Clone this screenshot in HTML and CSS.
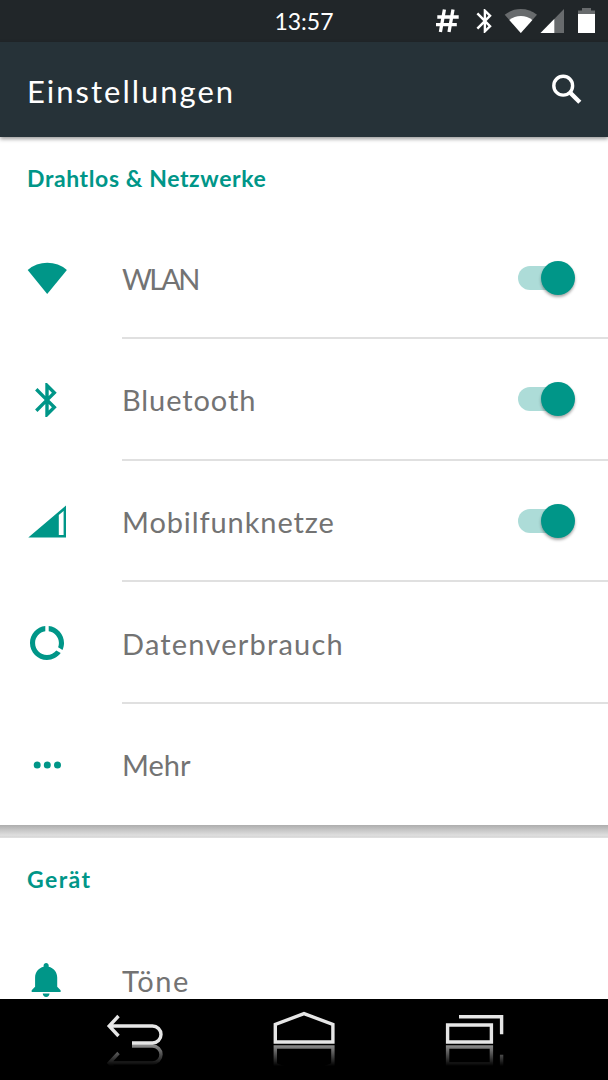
FILE: index.html
```html
<!DOCTYPE html>
<html lang="de">
<head>
    <meta charset="UTF-8">
    <meta name="viewport" content="width=device-width, initial-scale=1.0">
    <title>Einstellungen</title>
    <link rel="stylesheet" href="styles.css">
</head>
<body>
    <div class="screen">
        <div class="status-bar">
            <span class="clock">13:57</span>
            <div class="status-icons">
                <svg width="36" height="42" viewBox="0 0 36 42" fill="none" stroke="#fff" stroke-width="3.3">
                    <path d="M5.3 17h21.4M4 24.7h20.8M12.4 9.5L8.4 32M21 9.5L17 32"/>
                </svg>
                <svg width="34" height="42" viewBox="0 0 34 42" fill="#fff">
                    <path transform="translate(2.5 6.6) scale(1.2)" d="M17.71 7.71L12 2h-1v7.59L6.41 5 5 6.41 10.59 12 5 17.59 6.41 19 11 14.41V22h1l5.71-5.71-4.3-4.29 4.3-4.29zM13 5.83l1.88 1.88L13 9.59V5.83zm1.88 10.46L13 18.17v-3.76l1.88 1.88z"/>
                </svg>
                <svg width="38" height="42" viewBox="0 0 38 42">
                    <path fill="#686b6d" d="M2.7 14.7A26 26 0 0 1 35 14.7L18.8 33z"/>
                    <path fill="#fff" d="M7.3 19.9A19 19 0 0 1 30.4 19.9L18.8 33z"/>
                </svg>
                <svg width="30" height="42" viewBox="0 0 30 42">
                    <path fill="#686b6d" d="M.5 33L24 9v24z"/>
                    <path fill="#fff" d="M.5 33l13.8-14v14z"/>
                </svg>
                <svg width="32" height="42" viewBox="0 0 32 42">
                    <path fill="#686b6d" d="M12 8h9v2.5h4V14H8v-3.5h4z"/>
                    <path fill="#fff" d="M8 14h17v19H8z"/>
                </svg>
            </div>
        </div>

        <header class="app-bar">
            <h1>Einstellungen</h1>
            <svg width="36" height="36" viewBox="0 0 36 36" fill="none" stroke="#fff">
                <circle cx="14.2" cy="14.7" r="9.4" stroke-width="3.4"/>
                <path d="M21.5 22l9.3 9.3" stroke-width="4.4"/>
            </svg>
        </header>

        <main class="content">
            <section class="card">
                <h2 class="section-network">Drahtlos &amp; Netzwerke</h2>
                <div class="row">
                    <svg class="icon" viewBox="0 0 48 48"><path d="M4.7 16A30 30 0 0 1 43.9 16L24.2 40z"/></svg>
                    <div class="row-body">
                        <span class="label wlan">WLAN</span>
                        <div class="switch"></div>
                    </div>
                </div>
                <div class="row">
                    <svg class="icon" viewBox="-2.1 -2.1 28.2 28.2"><path d="M17.71 7.71L12 2h-1v7.59L6.41 5 5 6.41 10.59 12 5 17.59 6.41 19 11 14.41V22h1l5.71-5.71-4.3-4.29 4.3-4.29zM13 5.83l1.88 1.88L13 9.59V5.83zm1.88 10.46L13 18.17v-3.76l1.88 1.88z"/></svg>
                    <div class="row-body">
                        <span class="label bluetooth">Bluetooth</span>
                        <div class="switch"></div>
                    </div>
                </div>
                <div class="row">
                    <svg class="icon" viewBox="0 0 48 48"><path fill-rule="evenodd" d="M5.3 40.5L43 8.5v32zM35.8 18v20h4.8V14z"/></svg>
                    <div class="row-body">
                        <span class="label mobile">Mobilfunknetze</span>
                        <div class="switch"></div>
                    </div>
                </div>
                <div class="row">
                    <svg class="icon" viewBox="-2.1 -2.1 28.2 28.2"><path d="M13 2.05v3.03c3.39.49 6 3.39 6 6.92 0 .9-.18 1.75-.48 2.54l2.6 1.53c.56-1.24.88-2.62.88-4.07 0-5.18-3.95-9.45-9-9.95zM12 19c-3.87 0-7-3.13-7-7 0-3.53 2.61-6.43 6-6.92V2.05c-5.06.5-9 4.76-9 9.95 0 5.52 4.47 10 9.99 10 3.31 0 6.24-1.61 8.06-4.09l-2.6-1.53C16.17 17.98 14.21 19 12 19z"/></svg>
                    <div class="row-body">
                        <span class="label data">Datenverbrauch</span>
                    </div>
                </div>
                <div class="row">
                    <svg class="icon" viewBox="0 0 48 48"><circle cx="14.2" cy="24" r="3.5"/><circle cx="24.3" cy="24" r="3.5"/><circle cx="34.5" cy="24" r="3.5"/></svg>
                    <div class="row-body">
                        <span class="label more">Mehr</span>
                    </div>
                </div>
            </section>

            <div class="gap"></div>

            <section class="card">
                <h2 class="section-device">Gerät</h2>
                <div class="row">
                    <svg class="icon" viewBox="-2.1 -2.1 28.2 28.2"><path d="M11.5 22c1.1 0 2-.9 2-2h-4c0 1.1.9 2 2 2zm6.5-6v-5.5c0-3.07-2.13-5.64-5-6.32V3.5c0-.83-.67-1.5-1.5-1.5S10 2.67 10 3.5v.68c-2.87.68-5 3.25-5 6.32V16l-2 2v1h17v-1l-2-2z"/></svg>
                    <div class="row-body">
                        <span class="label sound">Töne</span>
                    </div>
                </div>
            </section>
        </main>

        <nav class="nav-bar">
            <svg width="608" height="81" viewBox="0 0 608 81">
                <defs>
                    <linearGradient id="fade" x1="0" y1="45" x2="0" y2="67" gradientUnits="userSpaceOnUse">
                        <stop offset="0" stop-color="#fff" stop-opacity=".65"/>
                        <stop offset="1" stop-color="#fff" stop-opacity="0"/>
                    </linearGradient>
                    <mask id="reflect" maskUnits="userSpaceOnUse" x="0" y="45" width="608" height="22">
                        <rect x="0" y="45" width="608" height="22" fill="url(#fade)"/>
                    </mask>
                    <g id="keys" fill="none" stroke="#e6e6e6" stroke-width="3.4">
                        <path d="M118.5 17l-9.3 10 9.3 10M109 27h43.5a8.5 8.5 0 0 1 0 17H132"/>
                        <path d="M275.3 43V25.5L304 14.6l28.9 10.9V43z"/>
                        <path d="M447.6 26h43.8v17h-43.8zM459 17.8h42.6v17.4"/>
                    </g>
                </defs>
                <use href="#keys"/>
                <g mask="url(#reflect)"><use href="#keys" transform="matrix(1 0 0 -1 0 91)"/></g>
            </svg>
        </nav>
    </div>
</body>
</html>
```

FILE: styles.css
```css
:root {
    --teal: #009688;
    --bar: #263238;
    --status: #212629;
    --text: #737373;
}

* {
    box-sizing: border-box;
}

body {
    margin: 0;
    font-family: 'Lato', 'Noto Sans', sans-serif;
    background: #fff;
}

svg {
    display: block;
}

.screen {
    width: 608px;
    height: 1080px;
    display: flex;
    flex-direction: column;
    overflow: hidden;
}

.status-bar {
    height: 42px;
    flex: none;
    display: grid;
    grid-template-columns: 1fr auto 1fr;
    align-items: center;
    padding-right: 6px;
    padding-left: 6px;
    background: var(--status);
    color: #fff;
}

.clock {
    grid-column: 2;
    font-size: 23px;
    line-height: 42px;
}

.status-icons {
    display: flex;
    justify-content: flex-end;
}

.app-bar {
    height: 94.5px;
    flex: none;
    display: flex;
    align-items: center;
    justify-content: space-between;
    padding: 0 23px 0 27px;
    background: var(--bar);
    color: #fff;
    box-shadow: 0 2px 4px rgba(0, 0, 0, 0.4);
    z-index: 1;
}

h1 {
    margin: 3px 0 0;
    font-size: 31px;
    font-weight: 400;
    letter-spacing: 2px;
}

.content {
    flex: 1;
    min-height: 0;
    overflow: hidden;
}

.card {
    background: #fff;
}

h2 {
    margin: 0;
    height: 81px;
    padding-left: 27px;
    font-size: 23px;
    font-weight: 700;
    line-height: 83px;
    color: var(--teal);
}

.section-network {
    letter-spacing: 0.6px;
}

.section-device {
    letter-spacing: 1.4px;
}

.row {
    height: 121.6px;
    display: flex;
    align-items: center;
    padding-left: 23px;
}

.icon {
    width: 48px;
    height: 48px;
    margin-right: 51px;
    flex: none;
    fill: var(--teal);
}

.row-body {
    flex: 1;
    height: 100%;
    display: flex;
    align-items: center;
    justify-content: space-between;
    padding-right: 33px;
    border-bottom: 2px solid #e0e0e0;
}

.row:last-child .row-body {
    border-bottom-color: transparent;
}

.label {
    font-size: 29px;
    padding-top: 2px;
    color: var(--text);
}

.wlan {
    letter-spacing: -2.8px;
}

.bluetooth,
.mobile {
    letter-spacing: 0.9px;
}

.data {
    letter-spacing: 1.2px;
}

.sound {
    letter-spacing: 1.5px;
}

.switch {
    width: 57px;
    height: 24px;
    margin-top: 1px;
    display: flex;
    align-items: center;
    justify-content: flex-end;
    border-radius: 12px;
    background: linear-gradient(90deg, #addcd8 40px, transparent 40px);
}

.switch::after {
    content: "";
    width: 34px;
    height: 34px;
    flex: none;
    border-radius: 50%;
    background: var(--teal);
    box-shadow: 0 2px 3px rgba(0, 0, 0, 0.35);
}

.gap {
    height: 13px;
    background: linear-gradient(#adadad, #c4c4c4 35%, #dcdcdc 75%, #dedede 88%, #d2d2d2 89%, #e4e4e4);
}

.nav-bar {
    height: 81px;
    flex: none;
    background: #000;
}
```
